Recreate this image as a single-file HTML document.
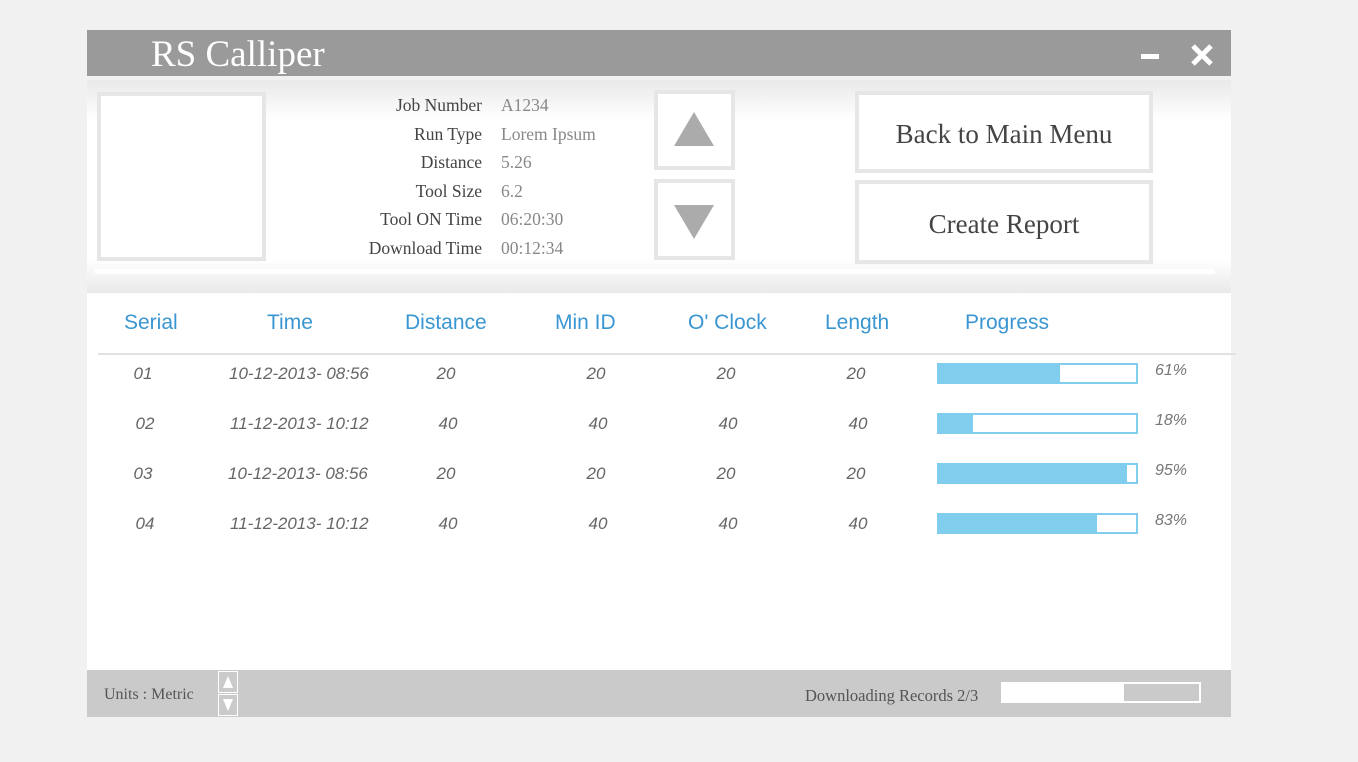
<!DOCTYPE html>
<html><head><style>
*{margin:0;padding:0;box-sizing:border-box}
body{width:1358px;height:762px;background:#f1f1f1;position:relative;overflow:hidden;font-family:"Liberation Serif",serif}
.a{position:absolute}
.title{left:87px;top:30px;width:1144px;height:46px;background:#9a9a9a}
.hdr{left:87px;top:80px;width:1144px;height:213px;background:linear-gradient(#e9e9e9 0px,#fff 40px,#fff 180px,#e9e9e9 213px)}
.main{left:87px;top:293px;width:1144px;height:377px;background:#fff}
.foot{left:87px;top:670px;width:1144px;height:47px;background:#cacaca}
.box{border:4px solid #e6e6e6;background:#fff}
.lbl{font-size:17.5px;color:#444;text-align:right;width:200px;left:282px}
.val{font-size:17.5px;color:#888;left:501px}
.btn{font-size:27px;color:#444;text-align:center}
.th{font-family:"Liberation Sans",sans-serif;font-size:21px;color:#3a96d2;top:311px}
.td{font-family:"Liberation Sans",sans-serif;font-style:italic;font-size:17px;color:#666;text-align:center;width:140px}
.bar{left:937px;width:201px;height:21px;border:2px solid #80cdee;background:#fff}
.bar i{display:block;height:100%;background:#80cdee}
.pc{left:1155px;font-family:"Liberation Sans",sans-serif;font-style:italic;font-size:16px;color:#777}
</style></head><body>
<div class="a title"></div>
<div class="a" style="left:151px;top:33px;font-size:37px;color:#fff">RS Calliper</div>
<div class="a" style="left:1141px;top:54px;width:18px;height:5px;background:#fff"></div>
<svg class="a" style="left:1190px;top:43px" width="24" height="24"><path d="M3 3L21 21M21 3L3 21" stroke="#fff" stroke-width="5"/></svg>
<div class="a hdr"></div>
<div class="a" style="left:95px;top:269px;width:1120px;height:5px;background:#fff"></div>
<div class="a box" style="left:97px;top:92px;width:169px;height:169px"></div>
<div class="a lbl" style="top:95px">Job Number</div><div class="a val" style="top:95px">A1234</div>
<div class="a lbl" style="top:124px">Run Type</div><div class="a val" style="top:124px">Lorem Ipsum</div>
<div class="a lbl" style="top:152px">Distance</div><div class="a val" style="top:152px">5.26</div>
<div class="a lbl" style="top:181px">Tool Size</div><div class="a val" style="top:181px">6.2</div>
<div class="a lbl" style="top:209px">Tool ON Time</div><div class="a val" style="top:209px">06:20:30</div>
<div class="a lbl" style="top:238px">Download Time</div><div class="a val" style="top:238px">00:12:34</div>
<div class="a box" style="left:654px;top:90px;width:81px;height:80px"></div>
<svg class="a" style="left:673px;top:111px" width="42" height="36"><path d="M21 1L41 35H1Z" fill="#ababab"/></svg>
<div class="a box" style="left:654px;top:179px;width:81px;height:81px"></div>
<svg class="a" style="left:673px;top:204px" width="42" height="36"><path d="M1 1H41L21 35Z" fill="#ababab"/></svg>
<div class="a box btn" style="left:855px;top:91px;width:298px;height:82px;line-height:78px">Back to Main Menu</div>
<div class="a box btn" style="left:855px;top:180px;width:298px;height:84px;line-height:80px">Create Report</div>
<div class="a main"></div>
<div class="a th" style="left:124px">Serial</div>
<div class="a th" style="left:267px">Time</div>
<div class="a th" style="left:405px">Distance</div>
<div class="a th" style="left:555px">Min ID</div>
<div class="a th" style="left:688px">O' Clock</div>
<div class="a th" style="left:825px">Length</div>
<div class="a th" style="left:965px">Progress</div>
<div class="a" style="left:98px;top:353px;width:1138px;height:2px;background:#e2e2e2"></div>

<div class="a td" style="left:73px;top:364px">01</div><div class="a td" style="left:229px;top:364px;width:145px;text-align:left">10-12-2013- 08:56</div><div class="a td" style="left:376px;top:364px">20</div><div class="a td" style="left:526px;top:364px">20</div><div class="a td" style="left:656px;top:364px">20</div><div class="a td" style="left:786px;top:364px">20</div>
<div class="a bar" style="top:363px"><i style="width:61.5%"></i></div><div class="a pc" style="top:362px">61%</div>

<div class="a td" style="left:75px;top:414px">02</div><div class="a td" style="left:230px;top:414px;width:140px;text-align:left">11-12-2013- 10:12</div><div class="a td" style="left:378px;top:414px">40</div><div class="a td" style="left:528px;top:414px">40</div><div class="a td" style="left:658px;top:414px">40</div><div class="a td" style="left:788px;top:414px">40</div>
<div class="a bar" style="top:413px"><i style="width:17.5%"></i></div><div class="a pc" style="top:412px">18%</div>

<div class="a td" style="left:73px;top:464px">03</div><div class="a td" style="left:228px;top:464px;width:145px;text-align:left">10-12-2013- 08:56</div><div class="a td" style="left:376px;top:464px">20</div><div class="a td" style="left:526px;top:464px">20</div><div class="a td" style="left:656px;top:464px">20</div><div class="a td" style="left:786px;top:464px">20</div>
<div class="a bar" style="top:463px"><i style="width:95.5%"></i></div><div class="a pc" style="top:462px">95%</div>

<div class="a td" style="left:75px;top:514px">04</div><div class="a td" style="left:230px;top:514px;width:140px;text-align:left">11-12-2013- 10:12</div><div class="a td" style="left:378px;top:514px">40</div><div class="a td" style="left:528px;top:514px">40</div><div class="a td" style="left:658px;top:514px">40</div><div class="a td" style="left:788px;top:514px">40</div>
<div class="a bar" style="top:513px"><i style="width:80%"></i></div><div class="a pc" style="top:512px">83%</div>

<div class="a foot"></div>
<div class="a" style="left:104px;top:686px;font-size:16px;color:#555">Units : Metric</div>
<div class="a" style="left:218px;top:671px;width:20px;height:22px;border:1px solid #fff"></div>
<svg class="a" style="left:222px;top:675px" width="12" height="14"><path d="M6 1L11 13H1Z" fill="#fff"/></svg>
<div class="a" style="left:218px;top:694px;width:20px;height:22px;border:1px solid #fff"></div>
<svg class="a" style="left:222px;top:698px" width="12" height="14"><path d="M1 1H11L6 13Z" fill="#fff"/></svg>
<div class="a" style="left:805px;top:686px;font-size:16.5px;color:#555">Downloading Records 2/3</div>
<div class="a" style="left:1001px;top:682px;width:200px;height:21px;border:2px solid #fff;background:#fff"><div style="margin-left:121px;height:100%;background:#cacaca"></div></div>
</body></html>
